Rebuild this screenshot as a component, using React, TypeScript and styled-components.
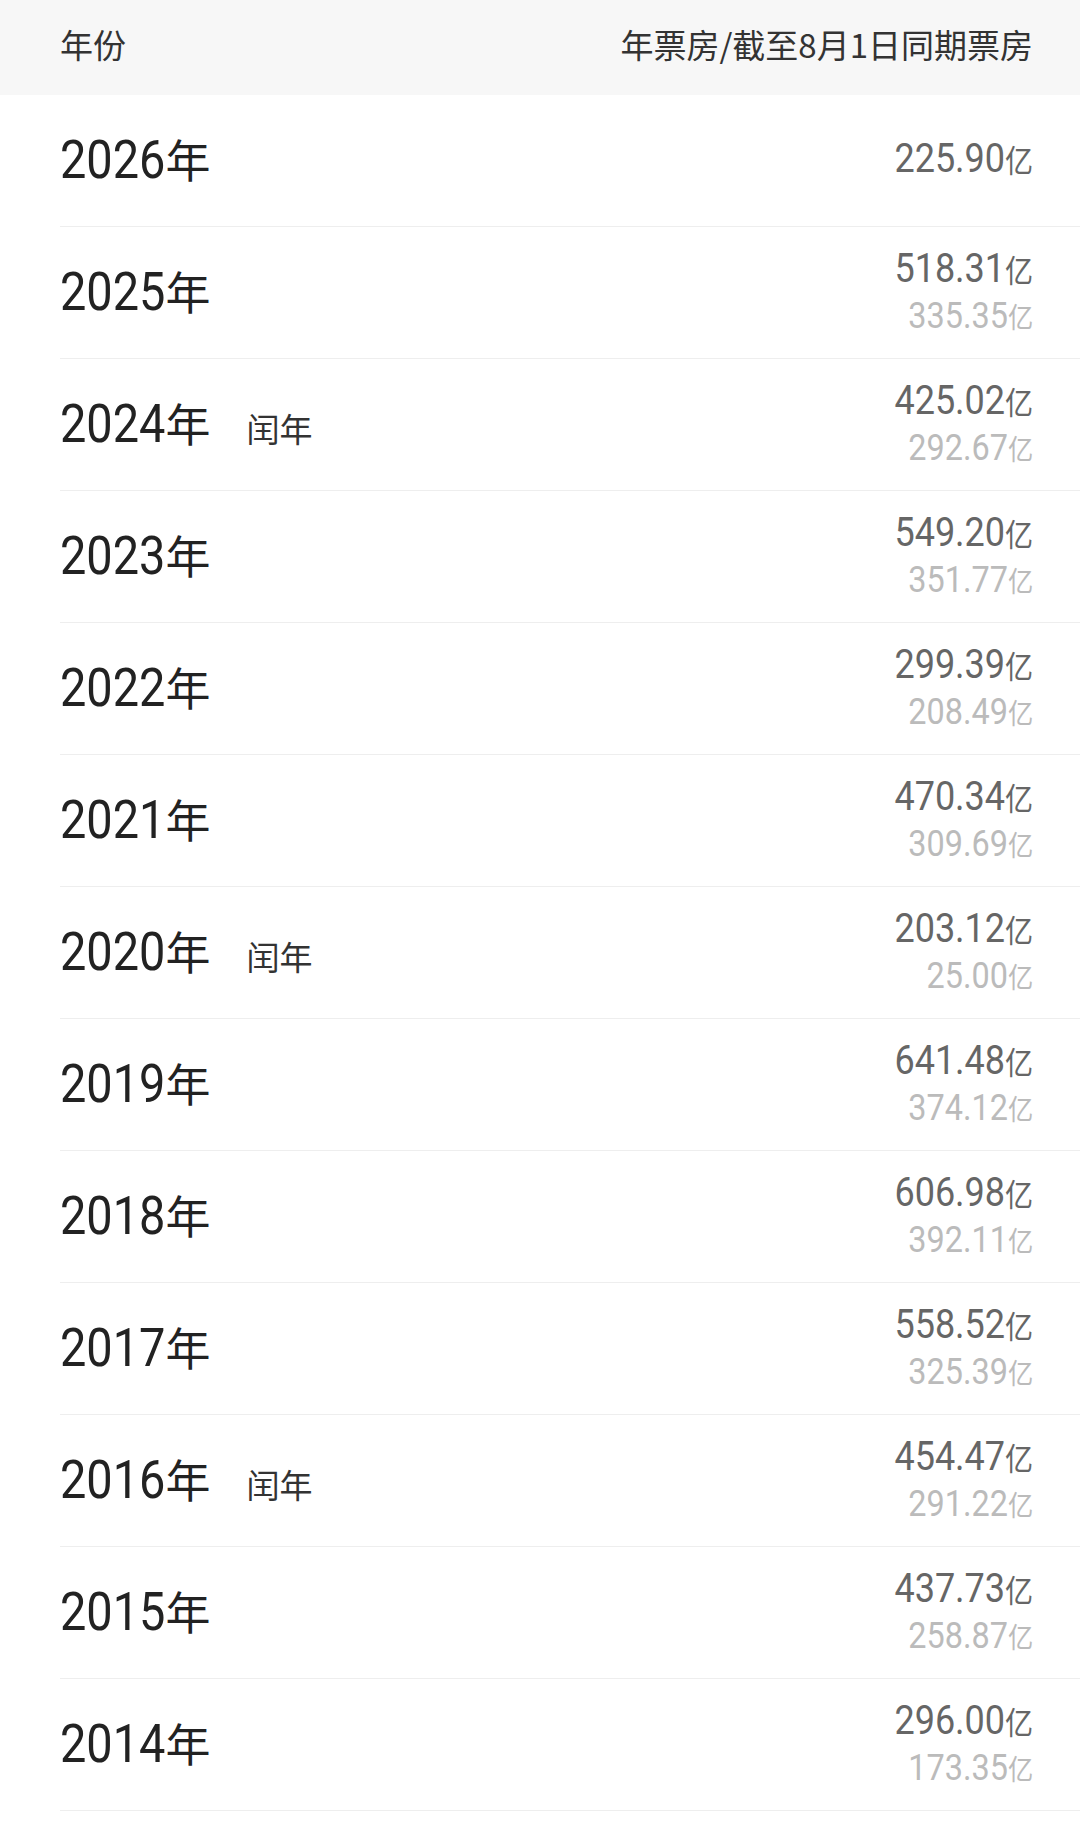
import React from 'react';
import styled, { createGlobalStyle } from 'styled-components';

const GlobalStyle = createGlobalStyle`
  body {
    margin: 0;
    background: #fff;
    font-family: "Noto Sans CJK SC", Roboto, sans-serif;
  }
`;

const rows = [
  { year: '2026', total: '225.90' },
  { year: '2025', total: '518.31', same: '335.35' },
  { year: '2024', total: '425.02', same: '292.67', leap: true },
  { year: '2023', total: '549.20', same: '351.77' },
  { year: '2022', total: '299.39', same: '208.49' },
  { year: '2021', total: '470.34', same: '309.69' },
  { year: '2020', total: '203.12', same: '25.00', leap: true },
  { year: '2019', total: '641.48', same: '374.12' },
  { year: '2018', total: '606.98', same: '392.11' },
  { year: '2017', total: '558.52', same: '325.39' },
  { year: '2016', total: '454.47', same: '291.22', leap: true },
  { year: '2015', total: '437.73', same: '258.87' },
  { year: '2014', total: '296.00', same: '173.35' },
];

export default function App() {
  return (
    <Page>
      <GlobalStyle />
      <Header>
        <span>年份</span>
        <span>年票房/截至8月1日同期票房</span>
      </Header>
      <List>
        {rows.map((r) => (
          <Row key={r.year}>
            <YearCell>
              <YearNum>{r.year}</YearNum>
              <YearUnit>年</YearUnit>
              {r.leap && <Leap>闰年</Leap>}
            </YearCell>
            <Values>
              <Amount>
                {r.total}
                <Unit>亿</Unit>
              </Amount>
              {r.same && (
                <Amount $muted>
                  {r.same}
                  <Unit>亿</Unit>
                </Amount>
              )}
            </Values>
          </Row>
        ))}
      </List>
    </Page>
  );
}

const Page = styled.div`
  width: 1080px;
`;

const Header = styled.div`
  height: 95px;
  box-sizing: border-box;
  background: #f7f7f7;
  display: flex;
  align-items: center;
  justify-content: space-between;
  padding: 0 47px 8px 60px;
  font-size: 33px;
  color: #333;
`;

const List = styled.div`
  padding-left: 60px;
`;

const Row = styled.div`
  height: 131px;
  border-bottom: 1px solid #eee;
  padding-right: 47px;
  display: flex;
  align-items: center;
  justify-content: space-between;
`;

const YearCell = styled.div`
  display: flex;
  align-items: baseline;
  color: #222;
  margin-bottom: 4px;
`;

/* condensed digits: the DIN-like face is not installed, so squeeze Roboto */
const YearNum = styled.span`
  display: inline-block;
  font-family: Roboto, "Liberation Sans", sans-serif;
  font-size: 53px;
  transform: scaleX(0.885);
  transform-origin: left center;
  margin-right: -0.26em;
`;

const YearUnit = styled.span`
  font-size: 45px;
`;

const Leap = styled.span`
  margin-left: 36px;
  font-size: 33px;
  color: #333;
`;

const Values = styled.div`
  display: flex;
  flex-direction: column;
  align-items: flex-end;
  gap: 9px;
  transform: scaleX(0.9);
  transform-origin: right center;
  margin-bottom: 3px;
`;

const Amount = styled.div<{ $muted?: boolean }>`
  font-family: Roboto, "Liberation Sans", sans-serif;
  font-size: ${(p) => (p.$muted ? '36px' : '40px')};
  line-height: 1;
  color: ${(p) => (p.$muted ? '#bbb' : '#666')};
`;

const Unit = styled.span`
  font-family: "Noto Sans CJK SC", sans-serif;
  font-size: 0.78em;
`;
